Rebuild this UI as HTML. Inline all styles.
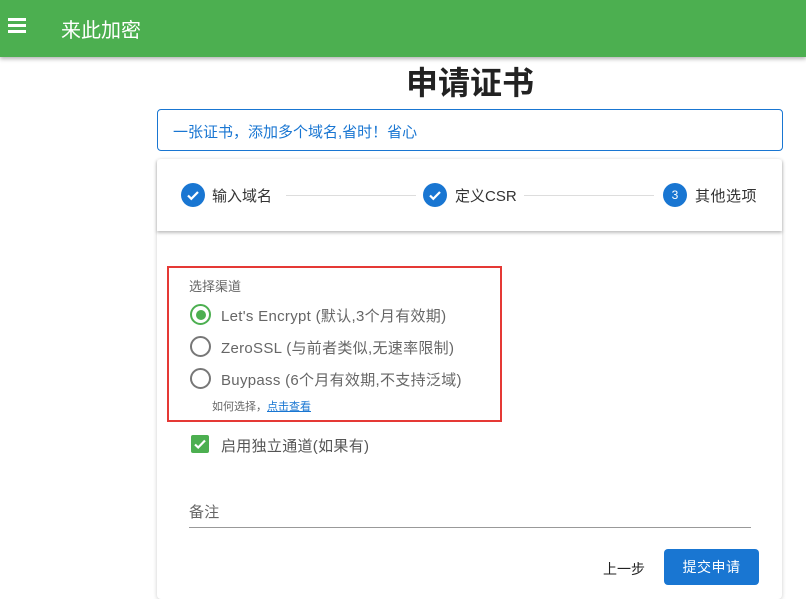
<!DOCTYPE html>
<html><head><meta charset="utf-8"><style>
*{box-sizing:border-box;margin:0;padding:0}
body{width:806px;height:590px;overflow:hidden;background:#fff;font-family:"Liberation Sans","Noto Sans CJK SC",sans-serif;position:relative}
.hdr{position:absolute;left:0;top:0;width:806px;height:57px;background:#4caf50;box-shadow:0 2px 4px rgba(0,0,0,.3)}
.hdr .t{position:absolute;left:61px;top:14px;color:#fff;font-size:20px}
.bar{position:absolute;left:8px;width:18px;height:2.5px;background:#fff}
.title{position:absolute;left:157px;width:626px;top:58px;text-align:center;font-size:32px;font-weight:bold;color:#222}
.alert{position:absolute;left:157px;top:109px;width:626px;height:42px;border:1px solid #1976d2;border-radius:4px;color:#1976d2;font-size:15px;padding:11px 15px}
.card{position:absolute;left:157px;top:159px;width:625px;height:440px;box-shadow:0 1px 4px rgba(0,0,0,.2);border-radius:4px;background:#fff}
.step{position:absolute;left:157px;top:159px;width:625px;height:72px;box-shadow:0 2px 3px rgba(0,0,0,.25)}
.ic{position:absolute;top:183px;width:24px;height:24px;border-radius:50%;background:#1976d2;color:#fff;font-size:12px;text-align:center;line-height:24px}
.sl{position:absolute;top:185px;font-size:15px;color:#333}
.line{position:absolute;top:195px;height:1px;background:#ddd}
.red{position:absolute;left:167px;top:266px;width:335px;height:156px;border:2px solid #e53935}
.lbl{position:absolute;font-size:13px;color:#666}
.radio{position:absolute;left:190px;width:21px;height:21px;border:2px solid #777;border-radius:50%}
.rt{position:absolute;left:221px;font-size:15px;color:#666;letter-spacing:.3px}
</style></head><body>
<div class="hdr"><div class="bar" style="top:18px"></div><div class="bar" style="top:24px"></div><div class="bar" style="top:30px"></div><div class="t">来此加密</div></div>
<div class="title">申请证书</div>
<div class="alert">一张证书，添加多个域名,省时！省心</div>
<div class="card"></div>
<div class="step"></div>
<div class="ic" style="left:181px"><svg width="24" height="24"><path d="M7 12.5l3.3 3.3L17 9" stroke="#fff" stroke-width="2.2" fill="none"/></svg></div>
<div class="sl" style="left:212px">输入域名</div>
<div class="line" style="left:286px;width:130px"></div>
<div class="ic" style="left:423px"><svg width="24" height="24"><path d="M7 12.5l3.3 3.3L17 9" stroke="#fff" stroke-width="2.2" fill="none"/></svg></div>
<div class="sl" style="left:455px">定义CSR</div>
<div class="line" style="left:524px;width:130px"></div>
<div class="ic" style="left:663px">3</div>
<div class="sl" style="left:695px;letter-spacing:.5px">其他选项</div>
<div class="red"></div>
<div class="lbl" style="left:189px;top:276px">选择渠道</div>
<div class="radio" style="top:304px;border-color:#4caf50"><div style="position:absolute;left:3.5px;top:3.5px;width:10px;height:10px;border-radius:50%;background:#4caf50"></div></div>
<div class="rt" style="top:305px">Let's Encrypt (默认,3个月有效期)</div>
<div class="radio" style="top:336px"></div>
<div class="rt" style="top:337px">ZeroSSL (与前者类似,无速率限制)</div>
<div class="radio" style="top:368px"></div>
<div class="rt" style="top:369px">Buypass (6个月有效期,不支持泛域)</div>
<div class="lbl" style="left:212px;top:398px;font-size:11px">如何选择，<span style="color:#1976d2;text-decoration:underline">点击查看</span></div>
<div style="position:absolute;left:191px;top:435px;width:18px;height:18px;background:#4caf50;border-radius:2px"><svg width="18" height="18"><path d="M4 9.5l3.2 3L14 5.5" stroke="#fff" stroke-width="2.2" fill="none"/></svg></div>
<div class="rt" style="top:435px;color:#555">启用独立通道(如果有)</div>
<div class="rt" style="left:189px;top:501px">备注</div>
<div style="position:absolute;left:189px;top:527px;width:562px;height:1px;background:#999"></div>
<div style="position:absolute;left:603px;top:559px;font-size:14px;color:#222">上一步</div>
<div style="position:absolute;left:664px;top:549px;width:95px;height:36px;background:#1976d2;border-radius:4px;color:#fff;font-size:14px;text-align:center;line-height:36px;letter-spacing:.5px">提交申请</div>
</body></html>
